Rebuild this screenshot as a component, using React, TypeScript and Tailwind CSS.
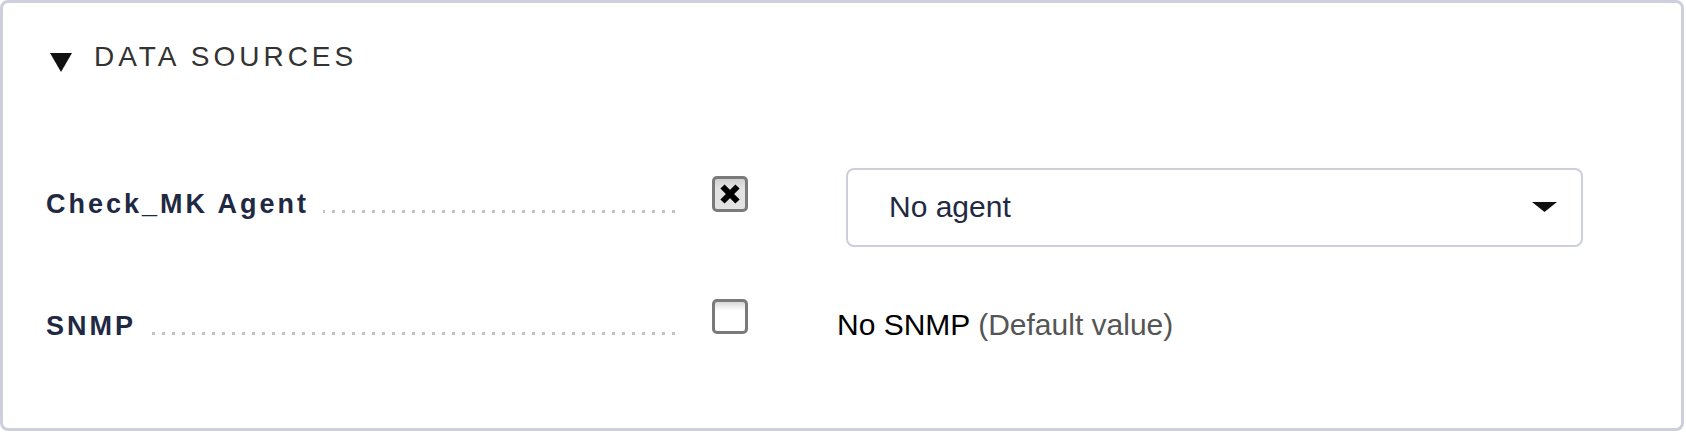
const font = { fontFamily: '"Liberation Sans", Arial, Helvetica, sans-serif' };

const Leader: React.FC = () => (
  <div className="flex-1 ml-[14px] mb-[7px] h-[3px] bg-[linear-gradient(to_right,transparent_7px,#c2c2c2_7px)] bg-[length:10px_3px] bg-repeat-x bg-right" />
);

const Label: React.FC<{ text: string }> = ({ text }) => (
  <div className="flex items-end w-[629px]">
    <span className="text-[27px] leading-[32px] font-bold tracking-[3px] text-[#1f2943] whitespace-nowrap">
      {text}
    </span>
    <Leader />
  </div>
);

const Checkbox: React.FC<{ checked?: boolean }> = ({ checked }) => (
  <div
    className={
      checked
        ? "w-[36px] h-[36px] border-[3px] border-[#7a7a7a] rounded-[5px] bg-[linear-gradient(to_bottom,#cfcfcf,#e2e2e2_30%,#e2e2e2)] flex items-center justify-center"
        : "w-[36px] h-[35px] border-[3px] border-[#7a7a7a] rounded-[5px] bg-[linear-gradient(to_bottom,#d8d8d8,#ffffff_30%,#ffffff)]"
    }
  >
    {checked && (
      <svg width="22" height="22" viewBox="0 0 22 22">
        <path d="M3.5 3.5 L18.5 18.5 M18.5 3.5 L3.5 18.5" stroke="#000" strokeWidth="6" strokeLinecap="butt" />
      </svg>
    )}
  </div>
);

export default function App() {
  return (
    <div className="bg-white w-[1686px] h-[432px]" style={font}>
      <div className="w-[1684px] h-[431px] border-[3px] border-[#cdcfdc] rounded-[8px] pt-[38px] pl-[43px] flex flex-col">
        {/* header */}
        <div className="flex items-start pl-[4px]">
          <svg className="mt-[12px]" width="22" height="19" viewBox="0 0 22 19">
            <polygon points="0,0 22,0 11,19" fill="#111" />
          </svg>
          <span className="ml-[22px] text-[28px] leading-[32px] tracking-[4px] text-[#333]">DATA SOURCES</span>
        </div>

        {/* Check_MK Agent */}
        <div className="flex items-start mt-[95px]">
          <div className="mt-[20px]">
            <Label text="Check_MK Agent" />
          </div>
          <div className="ml-[37px] mt-[8px]">
            <Checkbox checked />
          </div>
          <div className="ml-[98px] w-[737px] h-[79px] border-2 border-[#cdcfdc] rounded-[8px] flex items-center pl-[41px] pr-[24px]">
            <span className="flex-1 text-[30px] leading-[36px] text-[#1f2943] mt-[-2px]">No agent</span>
            <svg width="25" height="10" viewBox="0 0 25 10" className="mt-[-2px]">
              <polygon points="0,0 25,0 12.5,10" fill="#111" />
            </svg>
          </div>
        </div>

        {/* SNMP */}
        <div className="flex items-start mt-[52px]">
          <div className="mt-[11px]">
            <Label text="SNMP" />
          </div>
          <div className="ml-[37px]">
            <Checkbox />
          </div>
          <div className="ml-[89px] mt-[8px] text-[30px] leading-[36px] whitespace-nowrap">
            <span className="text-black">No SNMP</span>{" "}
            <span className="text-[#555]">(Default value)</span>
          </div>
        </div>
      </div>
    </div>
  );
}
